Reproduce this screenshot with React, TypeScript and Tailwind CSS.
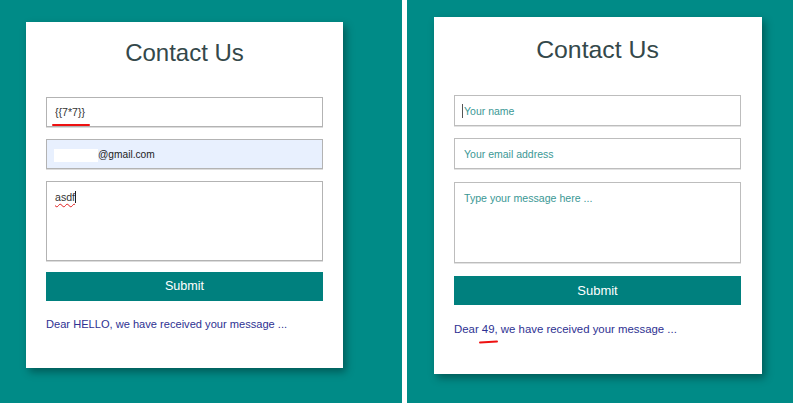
import React from "react";

const font = { fontFamily: '"Liberation Sans", Arial, sans-serif' };

export default function App() {
  return (
    <div className="flex w-[793px] h-[403px] overflow-hidden bg-[#008b87]" style={font}>
      {/* Left: submitted form */}
      <div className="w-[402px] shrink-0 pl-[26px] pt-[22px]">
        <div className="w-[317px] h-[346px] bg-white pt-[16px] px-[20px] shadow-[3px_4px_8px_rgba(0,0,0,0.35)]">
          <h1 className="h-[30px] text-[24px] leading-[30px] text-center text-[#34484a]">Contact Us</h1>

          <div className="relative mt-[29px]">
            <input
              defaultValue="{{7*7}}"
              className="w-full h-[30px] px-[8px] text-[10.6px] text-[#333] bg-white border border-[#b3b3b3] shadow-[0_1px_0_#dcdcdc] outline-none"
            />
            <span className="absolute left-[6px] top-[27px] w-[38px] h-[2px] rounded-full bg-[#ee1111]" />
          </div>

          <div className="relative mt-[12px]">
            <input
              defaultValue="@gmail.com"
              className="w-full h-[30px] pl-[51px] text-[10.2px] text-[#222] bg-[#e8f0fe] border border-[#b3b3b3] shadow-[0_1px_0_#dcdcdc] outline-none"
            />
            <span className="absolute left-[8px] top-[10px] w-[44px] h-[13px] bg-white" />
          </div>

          <div className="relative mt-[12px] h-[80px] border border-[#b3b3b3] shadow-[0_1px_0_#dcdcdc] px-[8px] pt-[8px] text-[10.6px] text-[#333]">
            <span className="underline decoration-wavy decoration-[#e02020] decoration-1 underline-offset-2">asdf</span>
            <span className="inline-block w-[1px] h-[12px] bg-[#222] align-[-2px]" />
          </div>

          <button className="mt-[11px] w-full h-[29px] bg-[#00807e] text-white text-[12.6px]">Submit</button>

          <p className="mt-[16px] text-[11.1px] leading-[15px] text-[#2e3192]">Dear HELLO, we have received your message ...</p>
        </div>
      </div>

      {/* divider */}
      <div className="w-[5px] shrink-0 bg-white" />

      {/* Right: fresh form with result */}
      <div className="flex-1 pl-[27px] pt-[17px]">
        <div className="w-[328px] h-[357px] bg-white pt-[18px] pl-[20px] pr-[21px] shadow-[3px_4px_8px_rgba(0,0,0,0.35)]">
          <h1 className="h-[30px] text-[24.8px] leading-[30px] text-center text-[#34484a]">Contact Us</h1>

          <div className="relative mt-[30px]">
            <input
              placeholder="Your name"
              className="w-full h-[31px] px-[9px] text-[10.5px] bg-white border border-[#bdbdbd] shadow-[0_1px_0_#e2e2e2] outline-none placeholder:text-[#3b9895]"
            />
            <span className="absolute left-[8px] top-[9px] w-[1px] h-[14px] bg-[#555]" />
          </div>

          <input
            placeholder="Your email address"
            className="mt-[12px] w-full h-[31px] px-[9px] text-[10.5px] bg-white border border-[#bdbdbd] shadow-[0_1px_0_#e2e2e2] outline-none placeholder:text-[#3b9895]"
          />

          <textarea
            placeholder="Type your message here ..."
            className="mt-[13px] block w-full h-[81px] px-[9px] pt-[8px] text-[10.6px] bg-white border border-[#bdbdbd] shadow-[0_1px_0_#e2e2e2] outline-none resize-none placeholder:text-[#3b9895]"
          />

          <button className="mt-[13px] w-full h-[29px] bg-[#00807e] text-white text-[13px]">Submit</button>

          <p className="relative mt-[17px] text-[11.4px] leading-[15px] text-[#2e3192]">
            Dear 49, we have received your message ...
            <span className="absolute left-[25px] top-[19px] w-[19px] h-[2px] rounded-full bg-[#ee1111] -rotate-3" />
          </p>
        </div>
      </div>
    </div>
  );
}
